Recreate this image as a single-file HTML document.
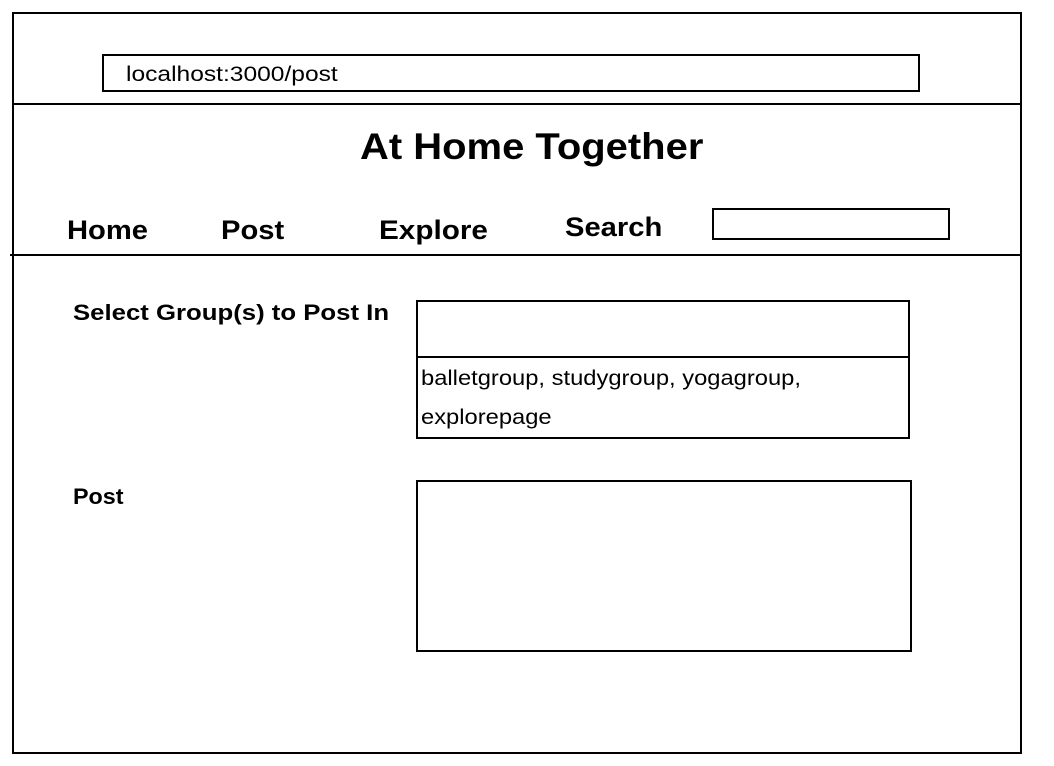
<!DOCTYPE html>
<html><head><style>
body{margin:0;width:1054px;height:766px;background:#fff;position:relative;font-family:"Liberation Sans",Arial,sans-serif;color:#000;overflow:hidden}
.a{position:absolute}
.b{position:absolute;border:2px solid #000;box-sizing:border-box}
.t{position:absolute;white-space:nowrap;line-height:1;transform-origin:0 0}
.n{font-weight:bold;font-size:27px;transform:scaleX(1.08)}
</style></head><body>
<div class="b" style="left:12px;top:12px;width:1010px;height:742px;border-width:2px"></div>
<div class="a" style="left:12px;top:103px;width:1010px;height:2px;background:#000"></div>
<div class="a" style="left:10px;top:254px;width:1012px;height:2px;background:#000"></div>
<div class="b" style="left:102px;top:54px;width:818px;height:38px"></div>
<div class="t" style="left:126px;top:64px;font-size:21px;transform:scaleX(1.17)">localhost:3000/post</div>
<div class="t" style="left:360px;top:128px;font-size:37px;font-weight:bold;transform:scaleX(1.08)">At Home Together</div>
<div class="t n" style="left:67px;top:217px">Home</div>
<div class="t n" style="left:221px;top:217px">Post</div>
<div class="t n" style="left:379px;top:217px;transform:scaleX(1.1)">Explore</div>
<div class="t n" style="left:565px;top:214px">Search</div>
<div class="b" style="left:712px;top:208px;width:238px;height:32px"></div>
<div class="t" style="left:73px;top:302px;font-size:22px;font-weight:bold;transform:scaleX(1.17)">Select Group(s) to Post In</div>
<div class="b" style="left:416px;top:300px;width:494px;height:139px"></div>
<div class="a" style="left:416px;top:356px;width:494px;height:2px;background:#000"></div>
<div class="t" style="left:421px;top:368px;font-size:21px;transform:scaleX(1.13)">balletgroup, studygroup, yogagroup,</div>
<div class="t" style="left:421px;top:407px;font-size:21px;transform:scaleX(1.13)">explorepage</div>
<div class="t" style="left:73px;top:486px;font-size:22px;font-weight:bold;transform:scaleX(1.06)">Post</div>
<div class="b" style="left:416px;top:480px;width:496px;height:172px"></div>
</body></html>
